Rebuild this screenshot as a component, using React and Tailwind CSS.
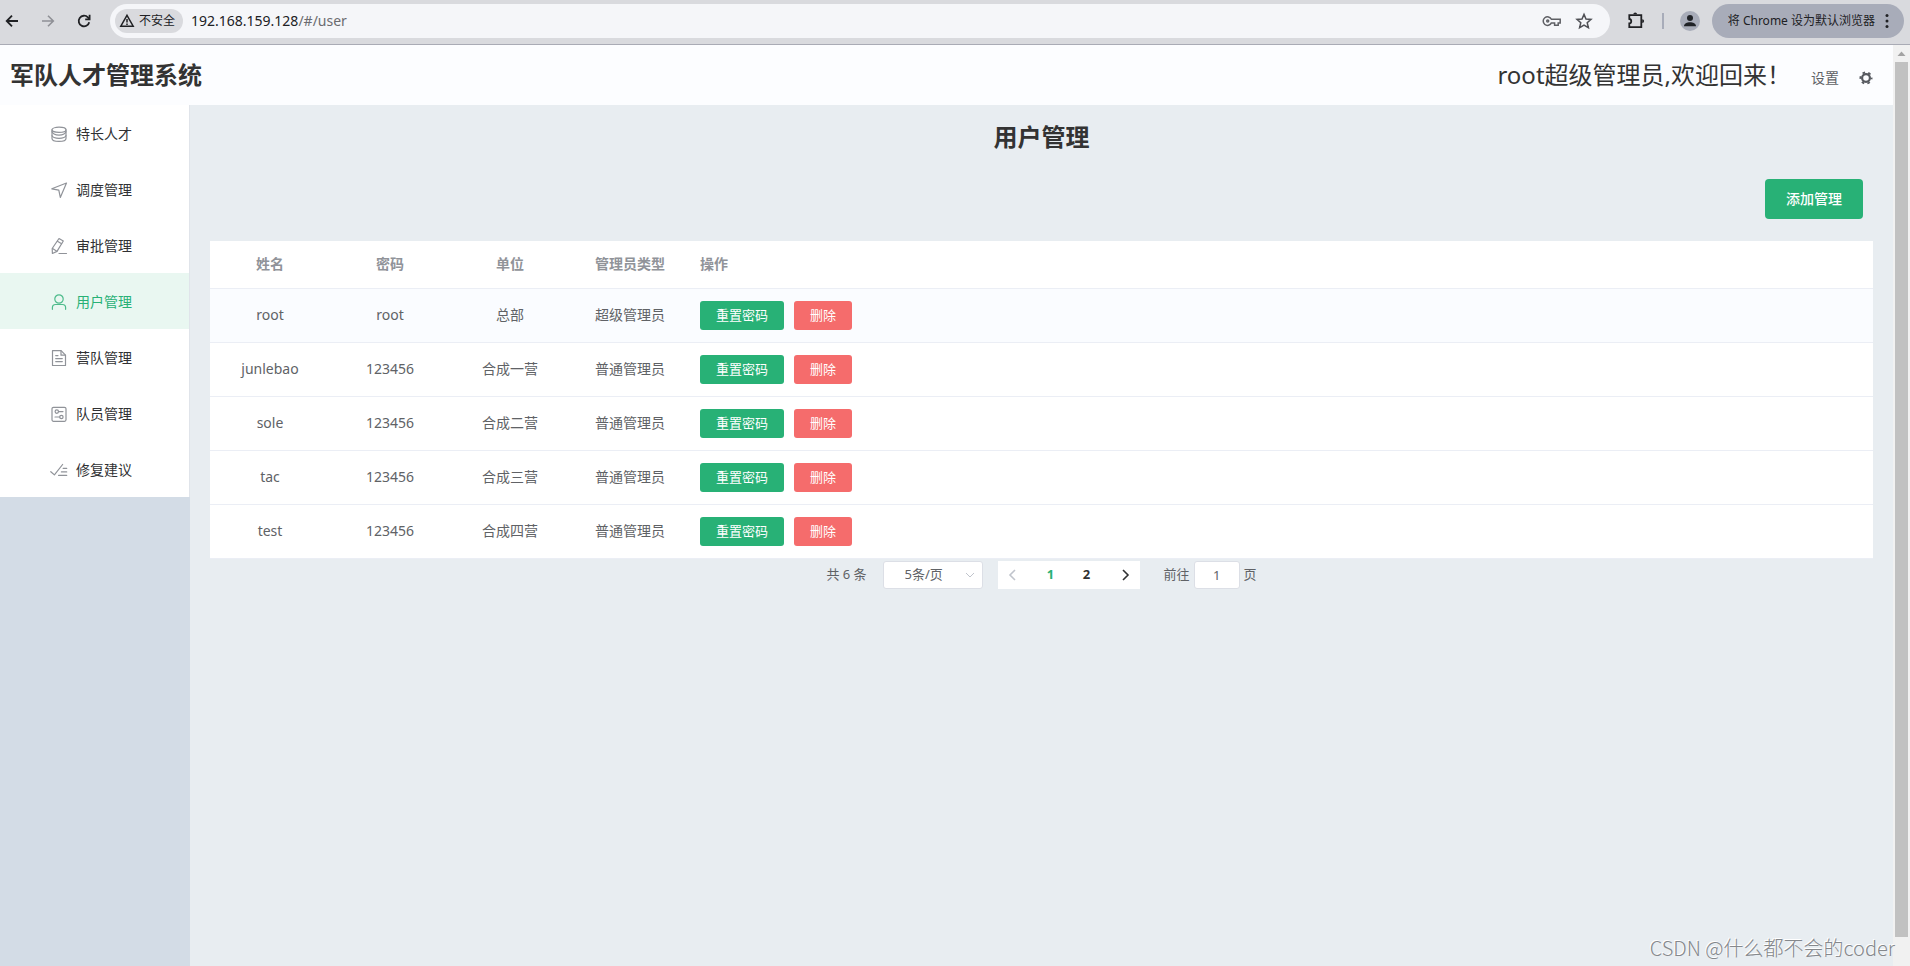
import { useState } from 'react';
import clsx from 'clsx';

const menuItems = [
  { key: 'talent', label: '特长人才', icon: CoinIcon },
  { key: 'dispatch', label: '调度管理', icon: PromotionIcon },
  { key: 'approval', label: '审批管理', icon: EditIcon },
  { key: 'user', label: '用户管理', icon: UserIcon },
  { key: 'camp', label: '营队管理', icon: DocumentIcon },
  { key: 'member', label: '队员管理', icon: SetUpIcon },
  { key: 'advice', label: '修复建议', icon: FinishedIcon },
];

const users = [
  { name: 'root', password: 'root', unit: '总部', type: '超级管理员' },
  { name: 'junlebao', password: '123456', unit: '合成一营', type: '普通管理员' },
  { name: 'sole', password: '123456', unit: '合成二营', type: '普通管理员' },
  { name: 'tac', password: '123456', unit: '合成三营', type: '普通管理员' },
  { name: 'test', password: '123456', unit: '合成四营', type: '普通管理员' },
];

function LineIcon({ children }) {
  return (
    <svg
      className="w-[18px] h-[18px]"
      viewBox="0 0 18 18"
      fill="none"
      stroke="currentColor"
      strokeWidth="1.2"
      strokeLinecap="round"
      strokeLinejoin="round"
      aria-hidden="true"
    >
      {children}
    </svg>
  );
}

function CoinIcon() {
  return (
    <LineIcon>
      <ellipse cx="9" cy="4.8" rx="7" ry="2.6" />
      <path d="M2 4.8v8.6c0 1.6 3.1 2.9 7 2.9s7-1.3 7-2.9V4.8" />
      <path d="M2 6.6c0 1.6 3.1 3.6 7 3.6s7-2 7-3.6M2 10.6c0 1.4 3.100 2.700 7 2.700s7-1.300 7-2.700" />
    </LineIcon>
  );
}

function PromotionIcon() {
  return (
    <LineIcon>
      <path d="M1.8 7.8 16.5 2l-6.2 14.4-1.500-7.200z" />
    </LineIcon>
  );
}

function EditIcon() {
  return (
    <LineIcon>
      <path d="M9 1.5 13.3 4 7 14.4l-4.6 2.1-.2-5z" />
      <path d="M7.4 4.2l4.2 2.5M2.6 11.6l4.2 2.6M9 16.5h7.5" />
    </LineIcon>
  );
}

function UserIcon() {
  return (
    <LineIcon>
      <circle cx="9" cy="6" r="4.2" />
      <path d="M2.4 16.3v-1.7c0-2 1.1-3.1 3.1-3.1h7c2 0 3.1 1.1 3.1 3.1v1.7" />
    </LineIcon>
  );
}

function DocumentIcon() {
  return (
    <LineIcon>
      <path d="M2.5 1.7h8.6l4.4 4.4v10.4h-13z" />
      <path d="M11 1.9v4.3h4.3M5.7 6.6H8M5.7 9.6h6.6M5.7 12.6h6.6" />
    </LineIcon>
  );
}

function SetUpIcon() {
  return (
    <LineIcon>
      <rect x="2" y="2.3" width="14" height="14" rx="1.5" />
      <circle cx="6.8" cy="6.6" r="1.7" />
      <circle cx="11.4" cy="12" r="1.7" />
      <path d="M8.6 6.6h4.4M5 12h4.6" />
    </LineIcon>
  );
}

function FinishedIcon() {
  return (
    <LineIcon>
      <path d="M.8 10.7l3.6 3.2 8.2-10.4M13.2 7.4h3.5M11.4 10.9h5.3M8.6 14.4h8.1" />
    </LineIcon>
  );
}

function BrowserBar() {
  return (
    <div className="flex h-[45px] shrink-0 items-center border-b border-[#a9abb5] bg-[#d9dade] pb-[3px] pr-1.5 text-[#202124]">
      <div className="flex w-[110px] shrink-0 items-center">
        <button className="ml-1 flex h-4 w-4 items-center justify-center" aria-label="后退">
          <svg viewBox="0 0 16 16" className="h-4 w-4" fill="none" stroke="#202124" strokeWidth="1.8">
            <path d="M14 8H3M8 2.7 2.7 8 8 13.3" />
          </svg>
        </button>
        <button className="ml-5 flex h-4 w-4 items-center justify-center" aria-label="前进">
          <svg viewBox="0 0 16 16" className="h-4 w-4" fill="none" stroke="#8f9096" strokeWidth="1.6">
            <path d="M2 8h11M8 2.7 13.3 8 8 13.3" />
          </svg>
        </button>
        <button className="ml-5 flex h-4 w-4 items-center justify-center" aria-label="重新加载">
          <svg viewBox="0 0 16 16" className="h-4 w-4" fill="none" stroke="#202124" strokeWidth="1.8">
            <path d="M13.2 9.2A5.3 5.3 0 1 1 11.9 4.4L13.4 6" />
            <path d="M13.6 1.8v4.5H9.2" />
          </svg>
        </button>
      </div>

      <div className="flex h-[34px] flex-1 items-center rounded-full bg-[#f5f6f9] pl-[5px] pr-4">
        <button className="flex h-6 items-center gap-1 rounded-full bg-[#d9dade] pl-1 pr-2 text-xs">
          <svg viewBox="0 0 16 16" className="h-4 w-4" fill="none" stroke="#202124" strokeWidth="1.5">
            <path d="M8 2.3 14.2 13.2H1.8z" />
            <path d="M8 6v3.6M8 10.5v1.5" />
          </svg>
          不安全
        </button>
        <span className="ml-2 text-sm">
          192.168.159.128<span className="text-[#6b6c70]">/#/user</span>
        </span>
        <button className="ml-auto flex h-5 w-5 items-center justify-center" aria-label="管理密码">
          <svg viewBox="0 0 20 20" className="h-5 w-5" fill="none" stroke="#5f6065" strokeWidth="1.5">
            <path d="M9.4 8.3A4.3 4.3 0 1 0 9.4 11.9h3.2v2.3h3.6v-2.3h2V8.3z" />
            <circle cx="5.7" cy="10" r="1" />
          </svg>
        </button>
        <button className="ml-3 flex h-5 w-5 items-center justify-center" aria-label="为此标签页添加书签">
          <svg viewBox="0 0 20 20" className="h-5 w-5" fill="none" stroke="#4f5055" strokeWidth="1.5">
            <path d="M10 3.4l2 4.6 5 .4-3.8 3.3 1.2 4.9-4.4-2.6-4.4 2.6 1.2-4.9L3 8.4 8 8z" />
          </svg>
        </button>
      </div>

      <button className="ml-4 flex h-5 w-5 items-center justify-center" aria-label="扩展程序">
        <svg viewBox="0 0 20 20" className="h-5 w-5" fill="none" stroke="#202124" strokeWidth="1.8">
          <path d="M3.3 4.2h12v11.9h-12v-3.7c2.6-.2 2.6-4.2 0-4.4z" />
          <path d="M7.3 3.3a1.9 1.9 0 0 1 3.8 0zM16.2 8.2a1.9 1.9 0 0 1 0 3.8z" fill="#202124" stroke="none" />
        </svg>
      </button>
      <span className="ml-4 h-4 w-0.5 bg-[#a8acb9]" />
      <button className="ml-4 flex h-5 w-5 items-center justify-center rounded-full bg-[#a8acb9]" aria-label="个人资料">
        <svg viewBox="0 0 20 20" className="h-5 w-5" fill="#202227">
          <circle cx="10" cy="7" r="3" />
          <path d="M4 15.2c0-2.7 3-4 6-4s6 1.3 6 4z" />
        </svg>
      </button>
      <button className="ml-3 flex h-[34px] items-center gap-2 rounded-full bg-[#a8acb9] pl-4 pr-[13px] text-xs">
        将 Chrome 设为默认浏览器
        <svg viewBox="0 0 8 16" className="h-4 w-2" fill="#202124">
          <circle cx="4" cy="2.5" r="1.5" />
          <circle cx="4" cy="8" r="1.5" />
          <circle cx="4" cy="13.5" r="1.5" />
        </svg>
      </button>
    </div>
  );
}

function Header() {
  return (
    <header className="flex h-[60px] shrink-0 items-center justify-between bg-[#fcfdff] pl-2.5 pr-5 text-[#333]">
      <h1 className="text-2xl font-bold">军队人才管理系统</h1>
      <div className="flex items-center">
        <span className="text-2xl">root超级管理员,欢迎回来！</span>
        <a href="#/settings" className="ml-5 pt-1.5 text-sm text-[#606266]">设置</a>
        <button className="ml-5 pt-1.5" aria-label="设置">
          <svg viewBox="0 0 14 14" className="h-3.5 w-3.5" fill="none" stroke="#56595f">
            <circle cx="7" cy="7" r="3.9" strokeWidth="2.2" />
            <circle cx="7" cy="7" r="5.6" strokeWidth="1.8" strokeDasharray="2.6 3.264" strokeDashoffset="1.3" />
          </svg>
        </button>
      </div>
    </header>
  );
}

function Sidebar({ active, onSelect }) {
  return (
    <aside className="w-[190px] shrink-0 bg-[#d3dce6]">
      <nav className="border-r border-[#e0e4ea] bg-white">
        {menuItems.map(({ key, label, icon: Icon }) => (
          <a
            key={key}
            href={`#/${key}`}
            onClick={() => onSelect(key)}
            className={clsx(
              'flex h-14 items-center pl-[50px] pt-0.5 text-sm',
              active === key ? 'bg-[#e9f7f1] text-[#28b176]' : 'text-[#303133]'
            )}
          >
            <span className={clsx('mr-2', active === key ? 'text-[#4dbb8b]' : 'text-[#909399]')}>
              <Icon />
            </span>
            {label}
          </a>
        ))}
      </nav>
    </aside>
  );
}

function UserTable() {
  return (
    <table className="w-full table-fixed border-collapse bg-white text-sm text-[#606266]">
      <colgroup>
        <col className="w-[120px]" />
        <col className="w-[120px]" />
        <col className="w-[120px]" />
        <col className="w-[120px]" />
        <col />
      </colgroup>
      <thead>
        <tr className="h-[47px] border-b border-[#ebeef5] text-[#909399]">
          <th className="font-bold">姓名</th>
          <th className="font-bold">密码</th>
          <th className="font-bold">单位</th>
          <th className="font-bold">管理员类型</th>
          <th className="px-2.5 text-left font-bold">操作</th>
        </tr>
      </thead>
      <tbody>
        {users.map((user) => (
          <tr key={user.name} className="h-[54px] border-b border-[#ebeef5] text-center first:bg-[#fafcff]">
            <td>{user.name}</td>
            <td>{user.password}</td>
            <td>{user.unit}</td>
            <td>{user.type}</td>
            <td className="px-2.5">
              <div className="flex gap-2.5 text-[13px] text-white">
                <button className="h-[29px] rounded-[3px] bg-[#28b176] px-4">重置密码</button>
                <button className="h-[29px] rounded-[3px] bg-[#f56c6c] px-4">删除</button>
              </div>
            </td>
          </tr>
        ))}
      </tbody>
    </table>
  );
}

function Pagination() {
  const [page, setPage] = useState(1);

  return (
    <div className="flex items-center justify-center pt-0.5 text-[13px] text-[#606266]">
      <span>共 6 条</span>
      <div className="relative ml-4">
        <select
          aria-label="每页条数"
          className="h-7 w-[100px] appearance-none rounded-[3px] border border-[#dcdfe6] bg-white pl-[21px] text-[13px]"
        >
          <option>5条/页</option>
          <option>10条/页</option>
        </select>
        <svg viewBox="0 0 10 10" className="pointer-events-none absolute right-2 top-[9px] h-2.5 w-2.5" fill="none" stroke="#c0c4cc">
          <path d="M1 3l4 4 4-4" />
        </svg>
      </div>
      <div className="ml-[15px] flex h-7 bg-white font-bold text-[#303133]">
        <button className="flex w-[35px] items-center pl-2.5" aria-label="上一页" onClick={() => setPage(1)}>
          <svg viewBox="0 0 10 12" className="h-3 w-2.5" fill="none" stroke="#c0c4cc" strokeWidth="1.6">
            <path d="M7 1 2 6l5 5" />
          </svg>
        </button>
        {[1, 2].map((n) => (
          <button key={n} className={clsx('w-9', page === n && 'text-[#28b176]')} onClick={() => setPage(n)}>
            {n}
          </button>
        ))}
        <button className="flex w-[35px] items-center justify-end pr-2.5" aria-label="下一页" onClick={() => setPage(2)}>
          <svg viewBox="0 0 10 12" className="h-3 w-2.5" fill="none" stroke="#303133" strokeWidth="1.6">
            <path d="M3 1l5 5-5 5" />
          </svg>
        </button>
      </div>
      <label className="ml-6 flex items-center gap-1">
        前往
        <input
          type="text"
          defaultValue="1"
          className="h-7 w-[46px] rounded-[3px] border border-[#dcdfe6] bg-white text-center text-[13px]"
        />
        页
      </label>
    </div>
  );
}

function Scrollbar() {
  return (
    <div className="flex w-[17px] shrink-0 flex-col items-center bg-[#f1f1f1] pb-[29px]">
      <svg viewBox="0 0 17 17" className="h-[17px] w-[17px] shrink-0" fill="#a3a3a3">
        <path d="M8.5 6.5 12.5 11h-8z" />
      </svg>
      <div className="w-[13px] flex-1 bg-[#c1c1c1]" />
    </div>
  );
}

export default function App() {
  const [active, setActive] = useState('user');

  return (
    <div className="relative flex h-screen flex-col overflow-hidden bg-[#e8edf1] font-['Noto_Sans','Noto_Sans_CJK_SC',sans-serif]">
      <BrowserBar />
      <div className="flex min-h-0 flex-1">
        <div className="flex min-w-0 flex-1 flex-col">
          <Header />
          <div className="flex min-h-0 flex-1">
            <Sidebar active={active} onSelect={setActive} />
            <main className="min-w-0 flex-1 px-5 pt-4">
              <h2 className="text-center text-2xl font-bold text-[#333]">用户管理</h2>
              <div className="mb-[22px] mt-[26px] flex justify-end pr-2.5">
                <button className="h-10 rounded bg-[#28b176] px-[21px] text-sm font-medium text-white">添加管理</button>
              </div>
              <UserTable />
              <Pagination />
            </main>
          </div>
        </div>
        <Scrollbar />
      </div>
      <p className="pointer-events-none absolute bottom-1 right-[15px] font-['Noto_Sans_CJK_SC',sans-serif] text-xl font-light text-[#85888c] [text-shadow:-1px_-1px_0_#fff]">
        CSDN @什么都不会的coder
      </p>
    </div>
  );
}
